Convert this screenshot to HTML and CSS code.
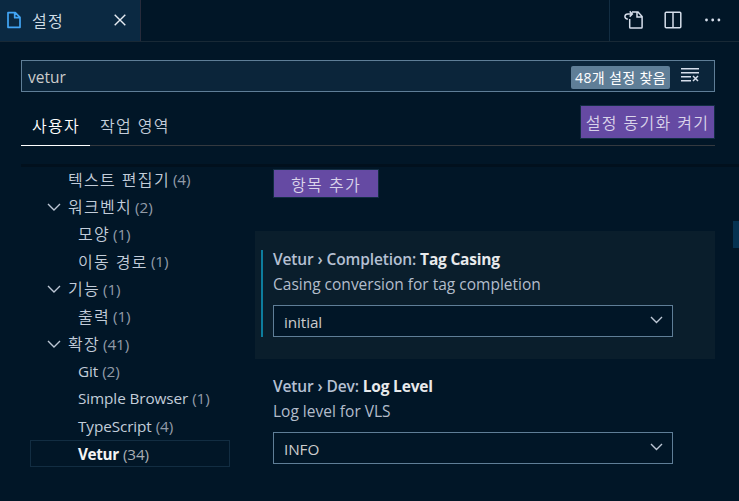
FILE: index.html
```html
<!DOCTYPE html>
<html lang="ko">
<head>
<meta charset="utf-8">
<title>설정</title>
<link rel="stylesheet" href="styles.css">
</head>
<body>
<header class="titlebar">
  <div class="tab">
    <svg class="file-icon" width="16" height="18" viewBox="0 0 16 18"><path d="M2 1.7h7.3L14 6.4v9.9H2zM8.7 1.7v5h5.3" fill="none" stroke="#42a5f5" stroke-width="1.7" stroke-linejoin="round"/></svg>
    <span class="ko tab-name">설정</span>
    <svg class="close" width="12" height="12" viewBox="0 0 12 12"><path d="M.7.7l10.6 10.6M11.3.7L.7 11.3" stroke="#e6ebf2" stroke-width="1.4"/></svg>
  </div>
  <div class="actions">
    <svg width="20" height="20" viewBox="0 0 20 20" fill="none" stroke="#d6deeb" stroke-width="1.5"><path d="M5.7 9v8.2q0 .8.8.8h10.8q.8 0 .8-.8V6.5L14 2H8M13 2v5h5M3.8 9.3C-.3 8.5.2 3.9 4 4h4.2M5.7 1.4L8.3 4 5.7 6.6"/></svg>
    <svg width="18" height="18" viewBox="0 0 18 18" fill="none" stroke="#d6deeb" stroke-width="1.5"><rect x="1.2" y="1.2" width="15.6" height="15.6" rx="1"/><path d="M9 1v16"/></svg>
    <svg width="18" height="4" viewBox="0 0 18 4" fill="#d6deeb"><circle cx="2.5" cy="2" r="1.4"/><circle cx="8.7" cy="2" r="1.4"/><circle cx="14.9" cy="2" r="1.4"/></svg>
  </div>
</header>
<main class="editor">
  <div class="search">
    <span class="query">vetur</span>
    <span class="badge">48개 설정 찾음</span>
    <svg class="clear" width="20" height="16" viewBox="0 0 20 16" fill="none" stroke="#d6deeb" stroke-width="1.5"><path d="M1 1.7h18M1 5.7h18M1 9.7h10M1 13.7h10M13 9l5 5M18 9l-5 5"/></svg>
  </div>
  <div class="scopes">
    <span class="scope ko active">사용자</span>
    <span class="scope ko">작업 영역</span>
    <button class="button sync ko">설정 동기화 켜기</button>
  </div>
  <div class="body">
    <nav class="toc">
      <div class="row"><span class="ko">텍스트 편집기</span><span class="count">(4)</span></div>
      <div class="row open"><svg class="chevron" width="14" height="8" viewBox="0 0 14 8"><path d="M1 1l6 6 6-6"/></svg><span class="ko">워크벤치</span><span class="count">(2)</span></div>
      <div class="row child"><span class="ko">모양</span><span class="count">(1)</span></div>
      <div class="row child"><span class="ko">이동 경로</span><span class="count">(1)</span></div>
      <div class="row open"><svg class="chevron" width="14" height="8" viewBox="0 0 14 8"><path d="M1 1l6 6 6-6"/></svg><span class="ko">기능</span><span class="count">(1)</span></div>
      <div class="row child"><span class="ko">출력</span><span class="count">(1)</span></div>
      <div class="row open"><svg class="chevron" width="14" height="8" viewBox="0 0 14 8"><path d="M1 1l6 6 6-6"/></svg><span class="ko">확장</span><span class="count">(41)</span></div>
      <div class="row child"><span>Git</span><span class="count">(2)</span></div>
      <div class="row child"><span>Simple Browser</span><span class="count">(1)</span></div>
      <div class="row child"><span>TypeScript</span><span class="count">(4)</span></div>
      <div class="row child selected"><span class="name">Vetur</span><span class="count">(34)</span></div>
    </nav>
    <section class="settings">
      <button class="button add ko">항목 추가</button>
      <article class="setting focused">
        <div class="content">
          <h3>Vetur › Completion: <b>Tag Casing</b></h3>
          <p>Casing conversion for tag completion</p>
          <div class="select"><span>initial</span><svg class="chevron" width="13" height="8" viewBox="0 0 13 8"><path d="M1 1l5.5 5.5L12 1"/></svg></div>
        </div>
      </article>
      <article class="setting">
        <div class="content">
          <h3>Vetur › Dev: <b>Log Level</b></h3>
          <p>Log level for VLS</p>
          <div class="select"><span>INFO</span><svg class="chevron" width="13" height="8" viewBox="0 0 13 8"><path d="M1 1l5.5 5.5L12 1"/></svg></div>
        </div>
      </article>
    </section>
    <div class="ruler"><div class="mark"></div></div>
  </div>
</main>
</body>
</html>
```
FILE: styles.css
```css
* { box-sizing: border-box; }
body {
  margin: 0;
  width: 739px;
  height: 501px;
  overflow: hidden;
  background: #011627;
  color: #c3cdda;
  font: 15.3px/20px "Open Sans", "Noto Sans CJK KR", sans-serif;
  letter-spacing: -0.1px;
}
.ko { font-family: "Noto Sans CJK KR", sans-serif; font-size: 16px; font-weight: 350; letter-spacing: 1.3px; white-space: nowrap; }
.titlebar { height: 42px; display: flex; justify-content: space-between; border-bottom: 1px solid #182936; }
.tab { width: 141px; display: flex; align-items: center; background: #0b2942; border-right: 1px solid #272b3b; padding: 0 14px 1px 6px; color: #d2dee7; }
.tab-name { margin: 0 0 0 10px; }
.close { margin-left: auto; }
.actions { width: 130px; border-left: 1px solid #122d42; display: flex; align-items: center; padding-left: 14px; gap: 21px; padding-bottom: 2px; }
.actions svg:nth-child(2) { margin: 0 1px 0 -1px; }
.editor { padding-top: 18px; }
.search { width: 694px; height: 32px; margin-left: 21px; border: 1px solid #5f7e97; background: #0b253a; display: flex; align-items: center; padding: 2px 14px 0 6px; }
.query { font-size: 15.5px; letter-spacing: 0; color: #cccccc; }
.badge { width: 99px; height: 23px; margin-left: auto; border-radius: 2px; background: #5f7e97; color: #fff; font-family: "Open Sans", "Noto Sans CJK KR", sans-serif; font-size: 14px; line-height: 24px; text-align: center; white-space: nowrap; letter-spacing: 0.35px; }
.clear { margin: -5px 0 0 10px; }
.scopes { width: 694px; height: 54px; margin-left: 21px; display: flex; border-bottom: 1px solid #34393f; }
.scope { height: 54px; padding: 23px 10px 0; }
.scope.active { width: 69px; border-bottom: 1px solid #fff; color: #fff; padding-left: 11px; }
.button { border: 1px solid #122d42; background: #654aa3; color: #d9d3ea; padding: 0; line-height: 20px; }
.sync { width: 135px; height: 34px; margin: 13px 0 0 auto; }
.body { margin-top: 18px; height: 337px; display: flex; }
.body::before { content: ""; width: 718px; height: 3px; margin: 0 -718px 0 21px; background: #01101d; }
.toc { width: 234px; padding-top: 2px; display: flex; flex-direction: column; }
.toc .row { margin-left: 9px; width: 200px; height: 27.4px; padding: 0 0 1px 38px; display: flex; align-items: center; gap: 4px; white-space: nowrap; }
.toc .row .ko { margin-top: -1px; }
.toc .row .ko + .count { margin-left: -1px; }
.toc .open { padding-left: 17px; }
.toc .open .ko { margin-left: 3px; }
.toc .child { padding-left: 48px; }
.toc .selected { border: 1px solid #122d42; color: #fff; padding: 1px 0 0 47px; }
.name { font-weight: 700; color: #f4f4f4; letter-spacing: -0.35px; }
.count { color: #929ba7; }
.selected .count { color: #a9adb3; }
.chevron { fill: none; stroke: #bdc7d5; stroke-width: 1.4; flex: none; }
.settings { width: 460px; padding-top: 5px; }
.add { display: block; width: 106px; height: 29px; margin: 0 0 33px 18px; }
.setting { height: 128px; padding: 19px 0 0 6px; margin-bottom: -1px; }
.focused { background: #0a1e2c; }
.content { width: 412px; height: 87px; border-left: 2px solid transparent; padding-left: 10px; }
.focused .content { border-color: #0d7d9d; }
h3 { margin: 0; font-size: 15.5px; font-weight: 600; line-height: 19px; letter-spacing: -0.12px; color: #b5c0d3; }
h3 b { font-weight: 700; letter-spacing: -0.2px; color: #e8eaec; }
p { margin: 4px 0 0; font-size: 15.5px; letter-spacing: 0; line-height: 22px; color: #b3bdcb; }
.select { width: 400px; height: 32px; margin-top: 10px; border: 1px solid #5f7e97; background: #011627; color: #cccccc; display: flex; align-items: center; justify-content: space-between; padding: 1px 9px 0 10px; }
.select .chevron { margin-top: -3px; }
.ruler { width: 6px; margin-left: 18px; padding-top: 57px; }
.mark { height: 27px; background: #063251; }
```
